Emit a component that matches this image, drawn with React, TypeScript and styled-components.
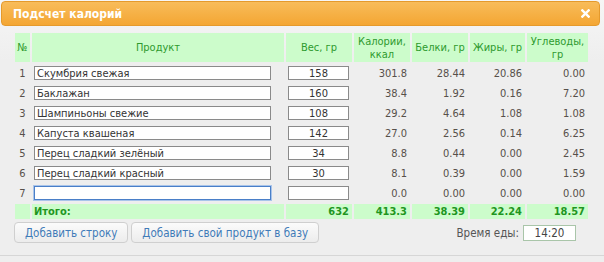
import React from "react";
import styled, { createGlobalStyle } from "styled-components";

const Global = createGlobalStyle`
  html, body { margin: 0; padding: 0; background: #eeeeee; }
  body { font-family: "DejaVu Sans Condensed", "DejaVu Sans", sans-serif; font-size: 11px; }
`;

const Dialog = styled.div`
  width: 602px;
  height: 253px;
  padding: 1px;
  background: linear-gradient(#f6f6f6, #eeeeee 60px);
  border-right: 1px solid #dcdcdc;
  border-bottom: 1px solid #d6d6d6;
`;

const TitleBar = styled.div`
  width: 599px;
  height: 25px;
  box-sizing: border-box;
  border: 1px solid #e59a2c;
  border-radius: 4px;
  background: linear-gradient(#f8bc5a, #f4a633);
  display: flex;
  align-items: center;
  justify-content: space-between;
  padding: 0 9px 0 11px;
`;

const Title = styled.span`
  color: #fff;
  font-weight: bold;
  font-size: 12px;
`;

const Close = styled.svg`
  width: 9px;
  height: 9px;
`;

const Body = styled.div`
  padding: 5px 0 0 12px;
`;

const Table = styled.table`
  border-spacing: 2px;
  border-collapse: separate;
  table-layout: fixed;
  color: #57504a;
`;

const Th = styled.th<{ w: number }>`
  width: ${(p) => p.w}px;
  box-sizing: border-box;
  height: 29px;
  padding: 0;
  background: #ccfccb;
  color: #2e9a2e;
  font-weight: normal;
  font-size: 11px;
  line-height: 13px;
  text-align: center;
`;

const Td = styled.td<{ align?: string }>`
  height: 18px;
  padding: 0 3px 0 2px;
  text-align: ${(p) => p.align || "right"};
  white-space: nowrap;
`;

const NumTd = styled.td`
  height: 18px;
  padding: 0;
  text-align: center;
`;

const TotalTd = styled.td<{ align?: string }>`
  height: 15px;
  padding: 0 3px 0 2px;
  background: #ccfccb;
  color: #1f961f;
  font-weight: bold;
  text-align: ${(p) => p.align || "right"};
`;

const ProductInput = styled.input<{ focused?: boolean }>`
  box-sizing: border-box;
  width: 237px;
  height: 14px;
  margin: 0;
  padding: 0 2px;
  font: inherit;
  font-size: 11px;
  color: #333;
  background: #fff;
  border: 1px solid ${(p) => (p.focused ? "#4a7fc8" : "#8a8a8a")};
  box-shadow: ${(p) => (p.focused ? "0 0 0 1px #a9c4ea" : "none")};
  outline: none;
  display: block;
`;

const WeightInput = styled.input`
  box-sizing: border-box;
  width: 61px;
  height: 14px;
  margin: 0;
  padding: 0;
  font: inherit;
  font-size: 11px;
  color: #333;
  text-align: center;
  background: #fff;
  border: 1px solid #8a8a8a;
  outline: none;
  display: block;
`;

const Footer = styled.div`
  display: flex;
  align-items: center;
  margin-top: 1px;
  padding-left: 1px;
  width: 562px;
`;

const Button = styled.button`
  height: 21px;
  box-sizing: border-box;
  border: 1px solid #cfcfcf;
  border-radius: 4px;
  background: linear-gradient(#fbfbfb, #ececec);
  color: #3f7bb8;
  font: inherit;
  font-size: 11.5px;
  padding: 0 10px;
  margin-right: 3px;
`;

const Spacer = styled.div`
  flex: 1;
`;

const Label = styled.span`
  color: #555;
  font-size: 11.5px;
  margin-right: 4px;
`;

const TimeInput = styled.input`
  box-sizing: border-box;
  width: 53px;
  height: 16px;
  margin: 0;
  padding: 0;
  font: inherit;
  font-size: 11.5px;
  color: #444;
  text-align: center;
  background: #fff;
  border: 1px solid #a9c5a9;
  outline: none;
`;

const rows = [
  ["Скумбрия свежая", "158", "301.8", "28.44", "20.86", "0.00"],
  ["Баклажан", "160", "38.4", "1.92", "0.16", "7.20"],
  ["Шампиньоны свежие", "108", "29.2", "4.64", "1.08", "1.08"],
  ["Капуста квашеная", "142", "27.0", "2.56", "0.14", "6.25"],
  ["Перец сладкий зелёный", "34", "8.8", "0.44", "0.00", "2.45"],
  ["Перец сладкий красный", "30", "8.1", "0.39", "0.00", "1.59"],
  ["", "", "0.0", "0.00", "0.00", "0.00"],
];

export default function App() {
  return (
    <>
      <Global />
      <Dialog>
        <TitleBar>
          <Title>Подсчет калорий</Title>
          <Close viewBox="0 0 10 10">
            <path d="M1.5 1.5 L8.5 8.5 M8.5 1.5 L1.5 8.5" stroke="#fff" strokeWidth="2.6" strokeLinecap="square" />
          </Close>
        </TitleBar>
        <Body>
          <Table>
            <thead>
              <tr>
                <Th w={15}>№</Th>
                <Th w={252}>Продукт</Th>
                <Th w={66}>Вес, гр</Th>
                <Th w={56}>Калории,<br />ккал</Th>
                <Th w={56}>Белки, гр</Th>
                <Th w={55}>Жиры, гр</Th>
                <Th w={61}>Углеводы,<br />гр</Th>
              </tr>
            </thead>
            <tbody>
              {rows.map((r, i) => (
                <tr key={i}>
                  <NumTd>{i + 1}</NumTd>
                  <Td align="left">
                    <ProductInput defaultValue={r[0]} focused={i === 6} />
                  </Td>
                  <Td align="left">
                    <WeightInput defaultValue={r[1]} />
                  </Td>
                  <Td>{r[2]}</Td>
                  <Td>{r[3]}</Td>
                  <Td>{r[4]}</Td>
                  <Td>{r[5]}</Td>
                </tr>
              ))}
              <tr>
                <TotalTd />
                <TotalTd align="left">Итого:</TotalTd>
                <TotalTd>632</TotalTd>
                <TotalTd>413.3</TotalTd>
                <TotalTd>38.39</TotalTd>
                <TotalTd>22.24</TotalTd>
                <TotalTd>18.57</TotalTd>
              </tr>
            </tbody>
          </Table>
          <Footer>
            <Button>Добавить строку</Button>
            <Button>Добавить свой продукт в базу</Button>
            <Spacer />
            <Label>Время еды:</Label>
            <TimeInput defaultValue="14:20" />
          </Footer>
        </Body>
      </Dialog>
    </>
  );
}
